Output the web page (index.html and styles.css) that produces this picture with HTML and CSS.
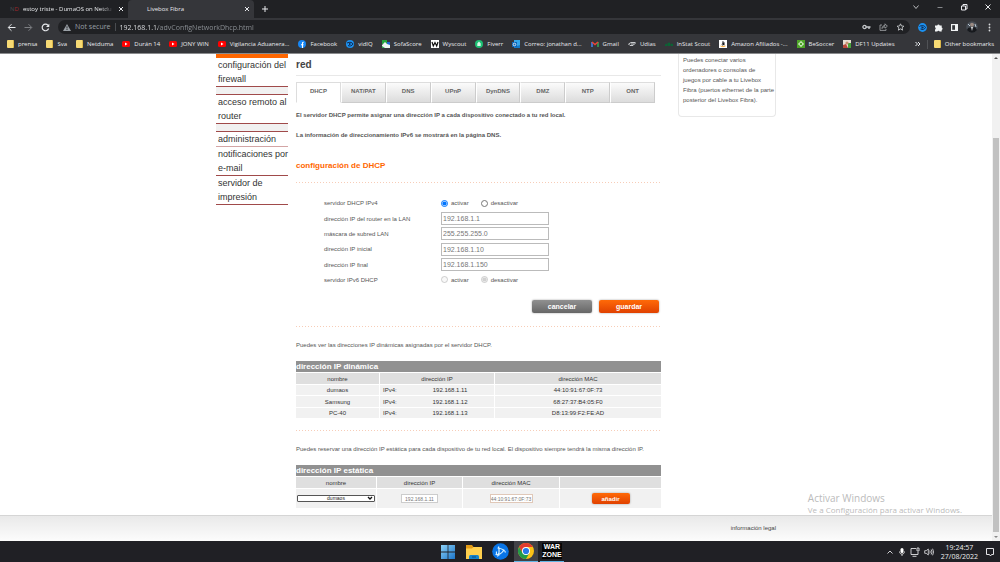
FILE: index.html
```html
<!DOCTYPE html>
<html lang="es">
<head>
<meta charset="utf-8">
<title>Livebox Fibra</title>
<link rel="stylesheet" href="styles.css">
</head>
<body>
<div class="desktop">
  <header class="browser">
    <div class="tabstrip">
      <div class="tab">
        <span class="tab-logo"><i>N</i>D</span>
        <span class="tab-title fade">estoy triste - DumaOS on Netdu</span>
        <button class="icon-btn" aria-label="Cerrar pestaña"><svg width="6" height="6" viewBox="0 0 6 6"><path d="M1 1l4 4M5 1l-4 4" stroke="#e8eaed"/></svg></button>
      </div>
      <div class="tab active">
        <span class="tab-title">Livebox Fibra</span>
        <button class="icon-btn" aria-label="Cerrar pestaña"><svg width="6" height="6" viewBox="0 0 6 6"><path d="M1 1l4 4M5 1l-4 4" stroke="#e8eaed"/></svg></button>
      </div>
      <button class="icon-btn new-tab" aria-label="Nueva pestaña"><svg width="8" height="8" viewBox="0 0 8 8"><path d="M4 1v6M1 4h6" stroke="#e8eaed"/></svg></button>
      <div class="window-controls">
        <button class="icon-btn" aria-label="Buscar pestañas"><svg width="8" height="8" viewBox="0 0 8 8" fill="none" stroke="#b8babd"><path d="M1.5 2.5L4 5.5l2.500-3"/></svg></button>
        <button class="icon-btn" aria-label="Minimizar"><svg width="8" height="8" viewBox="0 0 8 8"><path d="M1.500 4.500h5" stroke="#85878a"/></svg></button>
        <button class="icon-btn" aria-label="Restaurar"><svg width="8" height="8" viewBox="0 0 8 8" fill="none" stroke="#e8eaed"><path d="M1.500 3h4v4h-4zM3 3V1.500h4V6H5.500"/></svg></button>
        <button class="icon-btn" aria-label="Cerrar"><svg width="8" height="8" viewBox="0 0 8 8"><path d="M1.500 1.500l5 5M6.500 1.500l-5 5" stroke="#e8eaed"/></svg></button>
      </div>
    </div>
    <div class="toolbar">
      <button class="icon-btn" aria-label="Atrás"><svg width="9" height="9" viewBox="0 0 9 9" fill="none" stroke="#e8eaed"><path d="M8.500 4.500H1.500M4.500 1.200L1.200 4.500l3.300 3.300"/></svg></button>
      <button class="icon-btn" aria-label="Adelante"><svg width="9" height="9" viewBox="0 0 9 9" fill="none" stroke="#7d7f83"><path d="M.5 4.500h7M4.500 1.200l3.300 3.300-3.300 3.300"/></svg></button>
      <button class="icon-btn" aria-label="Recargar"><svg width="9" height="9" viewBox="0 0 9 9" fill="none" stroke="#e8eaed" stroke-width="1.200"><path d="M7.600 5.500A3.300 3.300 0 1 1 7 2.300"/><path d="M8.300.7v3.200H5z" fill="#e8eaed" stroke="none"/></svg></button>
      <div class="omnibox">
        <svg width="8" height="7" viewBox="0 0 8 7"><path d="M4 0l4 7H0z" fill="#9aa0a6"/><path d="M4 2.300v2.200M4 5v1" stroke="#202124" stroke-width=".9"/></svg>
        <span class="not-secure">Not secure</span>
        <input class="url" type="text" aria-label="Dirección" value="192.168.1.1/advConfigNetworkDhcp.html">
        <div class="omni-icons">
          <svg width="9" height="8" viewBox="0 0 9 8" fill="none" stroke="#c4c7ca"><circle cx="2.500" cy="4" r="1.600" stroke-width="1.300"/><path d="M4 4h4.500M7 4v2" stroke-width="1.400"/></svg>
          <svg width="9" height="8" viewBox="0 0 9 8" fill="none" stroke="#a6a9ac" stroke-width=".8"><path d="M3 2H1v5.400h6V6M3 5.500C3 3.500 4.500 2.500 6 2.500V.8l2.400 2.400L6 5.200V3.800C4.500 3.800 3.600 4.500 3 5.500z"/></svg>
          <svg width="9" height="8" viewBox="0 0 9 8" fill="none" stroke="#c4c7ca" stroke-width=".9"><path d="M4.500.8l1 2.200 2.400.2L6.100 4.800l.5 2.400-2.100-1.300-2.100 1.300.5-2.400L1.100 3.200 3.500 3z"/></svg>
        </div>
      </div>
      <div class="extensions">
        <svg width="9" height="9" viewBox="0 0 9 9"><circle cx="4.500" cy="4.500" r="4.400" fill="#1b91f1"/><path d="M1.500 3.500C4 1.500 7 3 7.500 4.500 6.500 6.500 4 7 2.500 6" fill="none" stroke="#102a50"/><path d="M3.500 3l2.500 1.500L3.500 6z" fill="#102a50"/></svg>
        <svg width="9" height="9" viewBox="0 0 9 9" fill="#f1f3f4"><path d="M1 2.500h2.200a1.300 1.300 0 0 1 2.500 0h2v2.100a1.200 1.200 0 0 1 0 2.300v1.700H5.600a1.200 1.200 0 0 0-2.300 0H1V6.500a1.200 1.200 0 0 0 0-2.200z"/></svg>
        <svg width="9" height="9" viewBox="0 0 9 9"><path d="M1 1h7v7H1z" fill="#f1f3f4"/><path d="M2.200 2.200h2.800v4.600H2.200z" fill="#35363a"/></svg>
        <svg width="12" height="12" viewBox="0 0 12 12"><circle cx="6" cy="6" r="5.800" fill="#474d55"/><path d="M1 9C2 6 4 6 6 7l3-1 2 3c-2 3-7 4-10 0" fill="#17191d"/><circle cx="6" cy="3.700" r="2" fill="#9b8b83"/><path d="M5 6l1 4 1-4" fill="#d9dde1"/><path d="M2 3l2 2M9 3l1 3" stroke="#b9c7d2"/></svg>
        <svg width="9" height="9" viewBox="0 0 9 9" fill="#d8dadd"><circle cx="4.500" cy="1.500" r=".9"/><circle cx="4.500" cy="4.500" r=".9"/><circle cx="4.500" cy="7.500" r=".9"/></svg>
      </div>
    </div>
    <nav class="bookmarks">
      <div class="bookmark-list">
        <a href="#"><span class="folder"></span>prensa</a>
        <a href="#"><span class="folder"></span>Sva</a>
        <a href="#"><span class="folder"></span>Netduma</a>
        <a href="#"><svg class="ico" viewBox="0 0 8 8"><rect y="1" width="8" height="6" rx="1.500" fill="#f00"/><path d="M3 2.500L5.500 4 3 5.500z" fill="#fff"/></svg>Durán 14</a>
        <a href="#"><svg class="ico" viewBox="0 0 8 8"><rect y="1" width="8" height="6" rx="1.500" fill="#f00"/><path d="M3 2.500L5.500 4 3 5.500z" fill="#fff"/></svg>JONY WIN</a>
        <a href="#"><svg class="ico" viewBox="0 0 8 8"><rect y="1" width="8" height="6" rx="1.500" fill="#f00"/><path d="M3 2.500L5.500 4 3 5.500z" fill="#fff"/></svg>Vigilancia Aduanera...</a>
        <a href="#"><svg class="ico" viewBox="0 0 8 8"><circle cx="4" cy="4" r="4" fill="#1686f5"/><path d="M4.500 8V3.200q0-1 1.200-.9M3 4.700h2.500" fill="none" stroke="#fff" stroke-width="1.100"/></svg>Facebook</a>
        <a href="#"><svg class="ico" viewBox="0 0 8 8"><circle cx="4" cy="4" r="4" fill="#1b91f1"/><path d="M1 3C4 1.500 6.500 2.500 7 4 6 6 3.500 6.500 2 5.500" fill="none" stroke="#102a50"/><path d="M3 2.700L5.300 4 3 5.300z" fill="#102a50"/></svg>vidIQ</a>
        <a href="#"><svg class="ico" viewBox="0 0 8 8"><path d="M0 0h5v4H0z" fill="#24a43c"/><path d="M5 2h3v6H5z" fill="#1f64d2"/><path d="M0 5l3-3 2 2 3 1v3H0z" fill="#eef5f2"/><path d="M0 6l3 2H0z" fill="#34a853"/></svg>SofaScore</a>
        <a href="#"><svg class="ico" viewBox="0 0 8 8"><path d="M0 0h8v8H0z" fill="#fff"/><path d="M1 2l1.300 4L4 2.500 5.700 6 7 2" fill="none" stroke="#111" stroke-width="1.200"/></svg>Wyscout</a>
        <a href="#"><svg class="ico" viewBox="0 0 8 8"><circle cx="4" cy="4" r="4" fill="#1dbf73"/><path d="M4 1.500l1.700 2V6H2.300V3.500z" fill="#d9f8e8"/></svg>Fiverr</a>
        <a href="#"><svg class="ico" viewBox="0 0 8 8"><path d="M2 0h6v8H2z" fill="#36a7ea"/><path d="M2 5l3 1 3-1v3H2z" fill="#1279c9"/><rect y="2" width="5" height="5" fill="#0f65b5"/><circle cx="2.500" cy="4.500" r="1.300" fill="none" stroke="#fff" stroke-width=".8"/></svg>Correo: jonathan d...</a>
        <a href="#"><svg class="ico" viewBox="0 0 8 8" fill="none" stroke-width="1.500"><path d="M1 7V2" stroke="#4285f4"/><path d="M7 7V2" stroke="#34a853"/><path d="M1 2l3 2.500L7 2" stroke="#ea4335"/></svg>Gmail</a>
        <a href="#"><svg class="ico" viewBox="0 0 8 8" fill="none" stroke="#c8cacd"><path d="M.5 4L3 2.500h4.500M.5 4L2 5.500h3L7.500 3M3 4h3"/></svg>Udias</a>
        <a href="#"><svg class="ico" viewBox="0 0 8 8" fill="#0a6434"><path d="M0 6V4.500l2-1V6zM2.500 6V3l2.500-.5V6zM5.500 6V3.500L8 4v2z"/></svg>InStat Scout</a>
        <a href="#"><svg class="ico" viewBox="0 0 8 8"><path d="M0 0h8v8H0z" fill="#fff"/><path d="M3 2.200q2-1 2 .6v2.500M5 3.300q-2.200 0-2 1.200t2-.4" fill="none" stroke="#111"/><path d="M1.500 6q2.500 1.500 5 0" fill="none" stroke="#f90" stroke-width=".8"/></svg>Amazon Afiliados -...</a>
        <a href="#"><svg class="ico" viewBox="0 0 8 8"><path d="M0 0h8v8H0z" fill="#4ea528"/><circle cx="4" cy="4" r="1.800" fill="none" stroke="#d5efc8"/><path d="M4 1v1M4 6v1M1 4h1M6 4h1" stroke="#d5efc8"/></svg>BeSoccer</a>
        <a href="#"><svg class="ico" viewBox="0 0 8 8"><path d="M0 0h8v8H0z" fill="#e7ded2"/><path d="M5 3h3v5H5z" fill="#47a339"/><path d="M0 5l3-1 2 4H0z" fill="#b94739"/><circle cx="4" cy="3" r="1.600" fill="#c99273"/></svg>DF11 Updates</a>
      </div>
      <div class="bookmark-end">
        <button class="icon-btn" aria-label="Más marcadores"><svg width="6" height="6" viewBox="0 0 6 6" fill="none" stroke="#e8eaed"><path d="M.5 1l2 2-2 2M3 1l2 2-2 2"/></svg></button>
        <span class="divider"></span>
        <a href="#"><span class="folder"></span>Other bookmarks</a>
      </div>
    </nav>
  </header>

  <div class="viewport">
    <div class="document">
      <div class="columns">
        <nav class="sidebar">
          <a class="first" href="#">configuración del<br>firewall</a>
          <span class="gap"></span>
          <a href="#">acceso remoto al<br>router</a>
          <span class="gap"></span>
          <a class="single" href="#">administración</a>
          <a href="#">notificaciones por<br>e-mail</a>
          <a href="#">servidor de<br>impresión</a>
        </nav>

        <main class="main">
          <h1>red</h1>
          <div class="page-tabs">
            <button class="current">DHCP</button>
            <button>NAT/PAT</button>
            <button>DNS</button>
            <button>UPnP</button>
            <button>DynDNS</button>
            <button>DMZ</button>
            <button>NTP</button>
            <button>ONT</button>
          </div>
          <p class="intro">El servidor DHCP permite asignar una dirección IP a cada dispositivo conectado a tu red local.</p>
          <p class="intro">La información de direccionamiento IPv6 se mostrará en la página DNS.</p>
          <h2>configuración de DHCP</h2>
          <hr class="dots">
          <form class="config">
            <div class="row tall" role="radiogroup" aria-labelledby="v4">
              <span class="label" id="v4">servidor DHCP IPv4</span>
              <label class="choice"><input type="radio" name="v4" checked>activar</label>
              <label class="choice"><input type="radio" name="v4">desactivar</label>
            </div>
            <div class="row"><label class="label" for="lan">dirección IP del router en la LAN</label><input class="field" id="lan" type="text" value="192.168.1.1"></div>
            <div class="row"><label class="label" for="mask">máscara de subred LAN</label><input class="field" id="mask" type="text" value="255.255.255.0"></div>
            <div class="row tall"><label class="label" for="start">dirección IP inicial</label><input class="field" id="start" type="text" value="192.168.1.10"></div>
            <div class="row"><label class="label" for="end">dirección IP final</label><input class="field" id="end" type="text" value="192.168.1.150"></div>
            <div class="row" role="radiogroup" aria-labelledby="v6">
              <span class="label" id="v6">servidor IPv6 DHCP</span>
              <label class="choice"><input type="radio" name="v6" disabled>activar</label>
              <label class="choice"><input type="radio" name="v6" disabled checked>desactivar</label>
            </div>
            <div class="actions">
              <button class="btn grey" type="button">cancelar</button>
              <button class="btn" type="button">guardar</button>
            </div>
          </form>
          <hr class="dots">
          <p class="note">Puedes ver las direcciones IP dinámicas asignadas por el servidor DHCP.</p>
          <table class="grid">
            <caption>dirección IP dinámica</caption>
            <colgroup><col class="c-name"><col class="c-type"><col class="c-ip"><col></colgroup>
            <thead><tr><th>nombre</th><th colspan="2">dirección IP</th><th>dirección MAC</th></tr></thead>
            <tbody>
              <tr><td>dumaos</td><td class="type">IPv4:</td><td>192.168.1.11</td><td>44:10:91:67:0F:73</td></tr>
              <tr><td>Samsung</td><td class="type">IPv4:</td><td>192.168.1.12</td><td>68:27:37:B4:05:F0</td></tr>
              <tr><td>PC-40</td><td class="type">IPv4:</td><td>192.168.1.13</td><td>D8:13:99:F2:FE:AD</td></tr>
            </tbody>
          </table>
          <hr class="dots">
          <p class="note">Puedes reservar una dirección IP estática para cada dispositivo de tu red local. El dispositivo siempre tendrá la misma dirección IP.</p>
          <table class="grid static">
            <caption>dirección IP estática</caption>
            <colgroup><col class="s-name"><col class="s-ip"><col class="s-mac"><col></colgroup>
            <thead><tr><th>nombre</th><th>dirección IP</th><th>dirección MAC</th><th></th></tr></thead>
            <tbody>
              <tr>
                <td class="pick"><span class="select-wrap"><select aria-label="nombre"><option>dumaos</option></select><svg width="6" height="5" viewBox="0 0 6 5"><path d="M1 1l2 2 2-2" fill="none" stroke="#111" stroke-width="1.300"/></svg></span></td>
                <td><input class="mini ip" type="text" aria-label="dirección IP" value="192.168.1.11"></td>
                <td><input class="mini mac" type="text" aria-label="dirección MAC" value="44:10:91:67:0F:73"></td>
                <td><button class="btn small" type="button">añadir</button></td>
              </tr>
            </tbody>
          </table>
        </main>

        <aside class="help">Puedes conectar varios<br>ordenadores o consolas de<br>juegos por cable a tu Livebox<br>Fibra (puertos ethernet de la parte<br>posterior del Livebox Fibra).</aside>
      </div>
      <footer class="footer"><a href="#">información legal</a></footer>
      <div class="watermark"><strong>Activar Windows</strong><span>Ve a Configuración para activar Windows.</span></div>
    </div>
    <div class="scrollbar">
      <span class="arrow up"></span>
      <span class="thumb"></span>
      <span class="arrow down"></span>
    </div>
  </div>

  <footer class="taskbar">
    <div class="apps">
      <button class="app" aria-label="Inicio"><svg width="14" height="14" viewBox="0 0 14 14"><defs><linearGradient id="win" x1="0" y1="0" x2="1" y2="1"><stop stop-color="#8bd0f7"/><stop offset="1" stop-color="#1c75c9"/></linearGradient></defs><path d="M0 0h6.600v6.600H0zM7.400 0H14v6.600H7.400zM0 7.400h6.600V14H0zM7.400 7.400H14V14H7.400z" fill="url(#win)"/></svg></button>
      <button class="app" aria-label="Explorador"><svg width="18" height="16" viewBox="0 0 18 16"><path d="M1 1h6l1.500 2H17v12H1z" fill="#e29a16"/><path d="M1 4.500h6L8.500 3H17v12H1z" fill="#ffd04e"/><path d="M4 15v-2.500q0-1.500 1.500-1.500h7q1.500 0 1.500 1.500V15z" fill="#1683cb"/><path d="M7 13h4" stroke="#0b4c83"/></svg></button>
      <button class="app" aria-label="Battle.net"><svg width="17" height="17" viewBox="0 0 17 17"><circle cx="8.500" cy="8.500" r="8.300" fill="#0874e6"/><path d="M6.500 3.500C7.500 7 7 11 5.500 13.500M5.500 5c4 .5 7.500 2.500 8 4.500M3.500 11.500c3 .5 7-1 8.500-5M4.500 8.500C4 11 5 12.500 7.500 12" fill="none" stroke="#d5efff" stroke-width="1.200"/></svg></button>
      <button class="app open" aria-label="Chrome"><svg width="16" height="16" viewBox="0 0 16 16"><circle cx="8" cy="8" r="8" fill="#fbc116"/><path d="M1.070 4A8 8 0 0 1 14.930 4H8L4.540 10z" fill="#e33b2e"/><path d="M1.070 4A8 8 0 0 0 8 16l3.460-6H4.540z" fill="#229b49"/><circle cx="8" cy="8" r="4" fill="#fff"/><circle cx="8" cy="8" r="3.100" fill="#2878e8"/></svg></button>
      <button class="app game" aria-label="Warzone"><span>WAR<br>ZONE</span></button>
    </div>
    <div class="tray">
      <svg width="8" height="8" viewBox="0 0 8 8" fill="none" stroke="#d0d0d4"><path d="M1.500 5.500L4 3l2.500 2.500"/></svg>
      <svg width="8" height="10" viewBox="0 0 8 10"><rect x="2.500" y="1" width="3" height="5" rx="1.500" fill="#fff"/><path d="M1.500 4.500c0 3.500 5 3.500 5 0M4 7.300V9" fill="none" stroke="#ddd" stroke-width=".9"/></svg>
      <svg width="10" height="10" viewBox="0 0 10 10" fill="none" stroke="#e1e1e4" stroke-width=".9"><path d="M6 1.500H1v6h7V5M2.500 9.300h4M7 1h2v3H7z"/></svg>
      <svg width="10" height="10" viewBox="0 0 10 10" fill="none" stroke="#cfcfd3" stroke-width=".9"><path d="M.7 3.700h1.500L4.300 2v6L2.200 6.300H.7zM5.700 3.500q1 1.500 0 3M7.200 2.500q1.600 2.500 0 5M8.600 1.700q2 3.300 0 6.600"/></svg>
      <div class="clock"><time>19:24:57</time><time>27/08/2022</time></div>
      <svg width="10" height="10" viewBox="0 0 10 10" fill="none" stroke="#e4e4e8"><path d="M1.500 1.500h7v6h-2L5.500 9l-1-1.500h-3z"/></svg>
    </div>
  </footer>
</div>
</body>
</html>
```

FILE: styles.css
```css
* { box-sizing: border-box; }

body {
  margin: 0;
  background: #fff;
  color: #555;
  font-family: "Liberation Sans", Arial, sans-serif;
  font-size: 6px;
}

button, input, select { font-family: inherit; margin: 0; }
a { color: inherit; text-decoration: none; }
svg { display: block; flex: none; }
h1, h2, p { margin: 0; }

.desktop {
  display: flex;
  flex-direction: column;
  height: 100vh;
  overflow: hidden;
}

/* Browser chrome */
.browser {
  flex: none;
  background: #35363a;
  color: #e8eaed;
  font-family: "Open Sans", "Noto Sans", sans-serif;
}

.icon-btn {
  display: flex;
  align-items: center;
  justify-content: center;
  padding: 0;
  border: 0;
  background: none;
}

.tabstrip {
  display: flex;
  align-items: stretch;
  height: 18px;
  background: #202124;
}

.tab {
  display: flex;
  align-items: center;
  gap: 4px;
  width: 128px;
  padding: 0 4px 0 10px;
}

.tab.active {
  width: 126px;
  padding-left: 19px;
  background: #35363a;
  border-radius: 4px 4px 0 0;
}

.tab-logo { color: #a1262c; width: 9px; }
.tab-logo i { color: #49494d; font-style: normal; }
.tab-title { flex: 1; white-space: nowrap; }
.fade { -webkit-mask-image: linear-gradient(90deg, #000 85%, transparent); mask-image: linear-gradient(90deg, #000 85%, transparent); }
.new-tab { padding: 0 7px; }

.window-controls {
  display: flex;
  gap: 16px;
  margin-left: auto;
  padding: 0 8px 4px 0;
}

.toolbar {
  display: flex;
  align-items: center;
  gap: 8px;
  height: 18px;
  padding: 0 6px 0 7px;
}

.omnibox {
  display: flex;
  flex: 1;
  align-items: center;
  gap: 4px;
  height: 14px;
  padding: 0 5px;
  border-radius: 7px;
  background: #202124;
  font-size: 7px;
}

.not-secure {
  padding-right: 4px;
  border-right: 1px solid #4a4c50;
  color: #9aa0a6;
  line-height: 8px;
  white-space: nowrap;
}

.url {
  flex: 1;
  min-width: 0;
  padding: 0;
  border: 0;
  background: linear-gradient(90deg, #e8eaed 38px, #8f9499 38px);
  -webkit-background-clip: text;
  background-clip: text;
  color: transparent;
  font-size: 7px;
}

.omni-icons { display: flex; gap: 8px; }
.extensions { display: flex; align-items: center; gap: 7px; }

.bookmarks {
  display: flex;
  justify-content: space-between;
  gap: 20px;
  height: 17px;
  padding: 0 6px 1px 7px;
  white-space: nowrap;
}

.bookmark-list {
  display: flex;
  flex: 0 1 888px;
  align-items: center;
  justify-content: space-between;
}

.bookmarks a { display: flex; align-items: center; gap: 4px; }
.bookmark-end { display: flex; align-items: center; gap: 6px; }
.ico { width: 8px; height: 8px; }
.folder { width: 7px; height: 8px; background: #f7da74; border-radius: 1px; border-right: 1px solid #dcb848; }
.divider { width: 1px; height: 9px; background: #505256; }

/* Router page */
.viewport {
  display: flex;
  flex: 1;
  min-height: 0;
  border-top: 1px solid #8a8b8d;
}

.document {
  position: relative;
  display: flex;
  flex: 1;
  flex-direction: column;
  min-width: 0;
}

.columns {
  display: grid;
  grid-template-columns: 72px minmax(0, 365px) 98px;
  column-gap: 8px;
  justify-content: center;
  flex: 1;
  padding-right: 9px;
}

.sidebar {
  display: flex;
  flex-direction: column;
  color: #333;
  font-size: 9px;
  line-height: 14px;
  white-space: nowrap;
}

.sidebar a { padding-left: 2px; border-bottom: 1px solid #a04a4a; }
.sidebar .first { border-top: 4px solid #ff6600; }
.sidebar .single { border-bottom-color: #d3a5a5; }
.gap { height: 8px; border-bottom: 1px solid #a04a4a; background: #f1f1f1; }

.main h1 {
  padding: 3px 0 2px;
  border-bottom: 1px solid #e8e8e8;
  color: #444;
  font-size: 10px;
  line-height: 16px;
}

.page-tabs {
  display: flex;
  margin: 6px 6px 7px 0;
}

.page-tabs button {
  flex: 1 1 0;
  height: 21px;
  padding: 0 0 4px;
  border: 1px solid #ccc;
  border-left-color: #fff;
  border-top-color: #ddd;
  background: linear-gradient(#fbfbfb, #dcdcdc);
  color: #666;
  font-size: 6px;
  font-weight: 700;
}

.page-tabs .current {
  border-color: #ddd;
  border-bottom-color: #fff;
  background: #fff;
}

.intro { font-weight: 700; line-height: 10px; margin-bottom: 10px; }

.main h2 {
  padding-top: 9px;
  color: #ff6600;
  font-size: 8px;
  line-height: 14px;
}

.dots {
  height: 1px;
  margin: 9px 0 0;
  border: 0;
  background: repeating-linear-gradient(90deg, #f7cdb8 0 1px, transparent 1px 3px);
}

.config { padding-top: 12px; }

.row {
  display: flex;
  align-items: center;
  height: 15px;
  padding-left: 28px;
}

.row.tall { height: 16px; }
.row .label { width: 117px; }
.choice { display: flex; align-items: center; gap: 3px; margin-right: 12px; }
.choice input { width: 7px; height: 7px; }

.field {
  width: 108px;
  height: 13px;
  padding: 0 1px;
  border: 1px solid #bbb;
  color: #777;
  font-size: 7px;
}

.actions {
  display: flex;
  justify-content: flex-end;
  gap: 7px;
  padding: 13px 2px 4px 0;
}

.btn {
  width: 60px;
  height: 13px;
  padding: 0;
  border: 0;
  border-radius: 2px;
  background: linear-gradient(#ff6a08, #e04100);
  box-shadow: 0 0 2px #999;
  color: #fff;
  font-size: 7px;
  font-weight: 700;
}

.btn.grey { background: linear-gradient(#909090, #666); }
.btn.small { width: 38px; height: 11px; font-size: 6px; }

.note { padding: 13px 0 11px; line-height: 10px; white-space: nowrap; }

.grid {
  width: 100%;
  table-layout: fixed;
  border-collapse: separate;
  border-spacing: 0;
  color: #333;
  text-align: center;
}

.grid caption {
  background: #919191;
  color: #fff;
  font-size: 8px;
  font-weight: 700;
  line-height: 11px;
  text-align: left;
}

.grid th, .grid td {
  height: 11px;
  padding: 0;
  border-top: 1px solid #fff;
  background: #f1f1f1;
  line-height: 10px;
}

.grid tbody tr:nth-child(2) td { height: 12px; }
.grid th { height: 12px; background: #dfdfdf; font-weight: 400; }
.grid th + th, .grid .type, .grid td:last-child { border-left: 1px solid #fff; }
.grid .type { padding-left: 3px; text-align: left; }
.c-name { width: 83px; }
.c-type { width: 27px; }
.c-ip { width: 88px; }
.grid + .dots { margin-top: 12px; }

.s-name { width: 80px; }
.s-ip { width: 86px; }
.s-mac { width: 97px; }
.grid.static tbody td { height: 20px; }
.grid.static tbody td + td { border-left: 1px solid #fff; }
.static td > * { vertical-align: middle; }
.select-wrap { display: inline-grid; align-items: center; width: 78px; }

.select-wrap select {
  grid-area: 1 / 1;
  width: 100%;
  height: 7px;
  padding: 0;
  border: 1px solid #555;
  border-radius: 1px;
  background: #fff;
  appearance: none;
  color: #222;
  font-size: 5px;
  line-height: 5px;
  text-align: center;
}

.select-wrap svg { grid-area: 1 / 1; justify-self: end; margin-right: 2px; pointer-events: none; }

.mini {
  height: 9px;
  padding: 0;
  border: 1px solid #ccc;
  background: #fff;
  color: #777;
  font-size: 5px;
  text-align: center;
}

.mini.ip { width: 37px; }
.mini.mac { width: 43px; border-color: #e0c8b8; }

.help {
  height: 63px;
  margin: 0 -9px 0 9px;
  padding: 1px 0 0 4px;
  border: 1px solid #e8e8e8;
  border-top: 0;
  border-radius: 0 0 4px 4px;
  line-height: 10px;
  white-space: nowrap;
}

.footer {
  display: flex;
  justify-content: center;
  height: 26px;
  border-top: 1px solid #d5d5d5;
  background: linear-gradient(#e9e9e9, #fcfcfc);
  color: #444;
  line-height: 25px;
}

.footer a { width: 560px; text-align: right; }

.watermark {
  position: absolute;
  right: 30px;
  bottom: 25px;
  display: flex;
  flex-direction: column;
  color: #bbb;
  font-family: "Open Sans", "Noto Sans", sans-serif;
}

.watermark strong { font-size: 10px; font-weight: 400; line-height: 12px; }
.watermark span { font-size: 8px; line-height: 12px; }

.scrollbar {
  display: flex;
  flex: 0 0 8px;
  flex-direction: column;
  align-items: center;
  justify-content: space-between;
  padding: 3px 0;
  background: #f1f1f1;
}

.thumb { flex: 1; width: 6px; margin: 79px 0 4px; background: #c1c1c1; }
.arrow { border: 2px solid transparent; }
.arrow.up { border-top: 0; border-bottom-color: #555; }
.arrow.down { border-bottom: 0; border-top-color: #888; }

/* Taskbar */
.taskbar {
  display: grid;
  grid-template-columns: 1fr auto 1fr;
  flex: none;
  height: 21px;
  background: #202025;
  color: #eee;
  font-family: "Open Sans", "Noto Sans", sans-serif;
}

.apps { display: flex; grid-column: 2; gap: 2px; }

.app {
  display: flex;
  align-items: center;
  justify-content: center;
  width: 24px;
  padding: 0;
  border: 0;
  background: none;
}

.app.open { border-bottom: 1px solid #62b5e5; background: #414146; }
.app.game { border-bottom: 1px solid #62b5e5; }

.game span {
  background: #050505;
  color: #fff;
  font-family: "Liberation Sans Narrow", "Liberation Sans", Arial, sans-serif;
  font-size: 7px;
  font-weight: 700;
  line-height: 8px;
}

.tray {
  display: flex;
  align-items: center;
  justify-content: flex-end;
  gap: 4px;
  padding-right: 5px;
}

.clock {
  display: flex;
  flex-direction: column;
  align-items: center;
  margin: 0 3px;
  font-size: 7px;
  line-height: 9px;
}
```
